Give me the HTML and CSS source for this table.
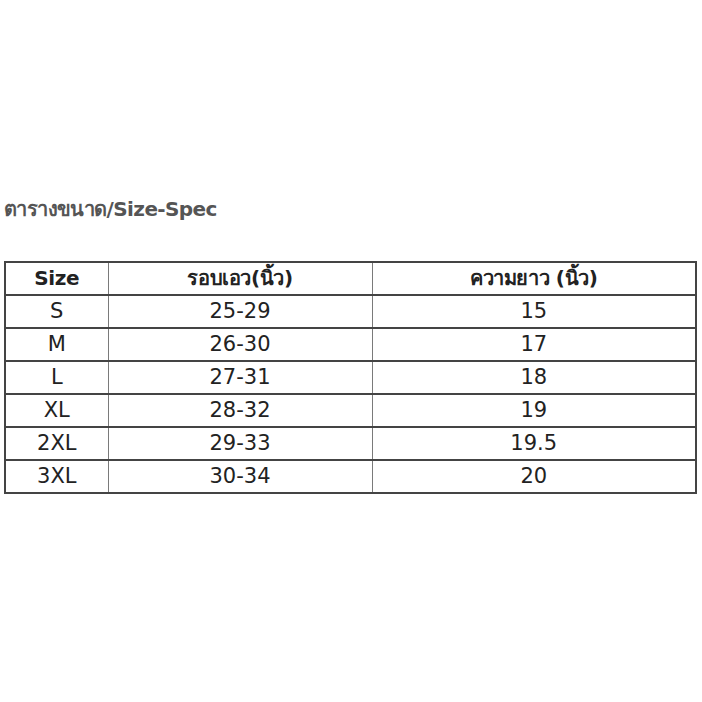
FILE: index.html
```html
<!DOCTYPE html>
<html lang="th">
<head>
<meta charset="utf-8">
<link rel="stylesheet" href="styles.css">
</head>
<body>
<div class="page">
  <h1 class="title">ตารางขนาด/Size-Spec</h1>
  <table class="size-table">
    <colgroup>
      <col class="c1"><col class="c2"><col class="c3">
    </colgroup>
    <thead>
      <tr><th>Size</th><th>รอบเอว(นิ้ว)</th><th>ความยาว (นิ้ว)</th></tr>
    </thead>
    <tbody>
      <tr><td>S</td><td>25-29</td><td>15</td></tr>
      <tr><td>M</td><td>26-30</td><td>17</td></tr>
      <tr><td>L</td><td>27-31</td><td>18</td></tr>
      <tr><td>XL</td><td>28-32</td><td>19</td></tr>
      <tr><td>2XL</td><td>29-33</td><td>19.5</td></tr>
      <tr><td>3XL</td><td>30-34</td><td>20</td></tr>
    </tbody>
  </table>
</div>
</body>
</html>
```

FILE: styles.css
```css
html, body {
  margin: 0;
  padding: 0;
  background: #ffffff;
}
.page {
  padding: 195px 8px 0 4px;
  font-family: "DejaVu Sans", "Noto Sans", sans-serif;
}
.title {
  margin: 0 0 38px 0;
  font-size: 20px;
  font-weight: bold;
  color: #555555;
  line-height: 28px;
  letter-spacing: -0.6px;
}
.size-table {
  width: 691px;
  border-collapse: collapse;
  table-layout: fixed;
}
.c1 { width: 103px; }
.c2 { width: 264px; }
.c3 { width: 324px; }
.size-table th,
.size-table td {
  border-top: 2px solid #444444;
  border-bottom: 2px solid #444444;
  border-left: 1px solid #7a7a7a;
  border-right: 1px solid #7a7a7a;
  text-align: center;
  padding: 0;
  height: 31px;
  font-size: 21px;
  color: #222222;
  line-height: 31px;
}
.size-table th:first-child,
.size-table td:first-child {
  border-left: 2px solid #444444;
}
.size-table th:last-child,
.size-table td:last-child {
  border-right: 2px solid #444444;
}
.size-table th {
  font-size: 20px;
  font-weight: bold;
  letter-spacing: -0.4px;
  color: #222222;
}
```
